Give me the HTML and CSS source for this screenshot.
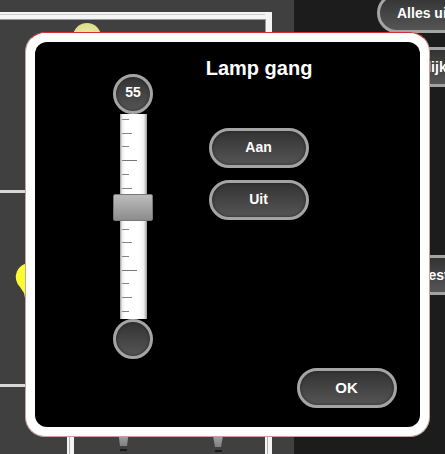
FILE: index.html
```html
<!DOCTYPE html>
<html lang="en">
<head>
  <meta charset="UTF-8">
  <title>Lamp gang</title>
  <link rel="stylesheet" href="styles.css">
</head>
<body>
  <!-- floor plan behind the dialog -->
  <svg class="plan" width="294" height="454" viewBox="0 0 294 454">
    <defs>
      <radialGradient id="paleLamp" cx="0.5" cy="0.7" r="0.7">
        <stop offset="0" stop-color="#f8f8a8"/>
        <stop offset="1" stop-color="#dcdc90"/>
      </radialGradient>
      <linearGradient id="lampBase" x1="0" y1="0" x2="0" y2="1">
        <stop offset="0" stop-color="#b4b4b4"/>
        <stop offset="1" stop-color="#808080"/>
      </linearGradient>
    </defs>
    <rect width="294" height="454" fill="#404040"/>

    <!-- walls -->
    <rect x="0" y="12" width="272" height="8" fill="#f4f4f4"/>
    <rect x="0" y="14" width="272" height="1" fill="#cfcfcf"/>
    <rect x="0" y="19" width="265" height="1" fill="#9a9a9a"/>
    <rect x="265" y="12" width="7" height="30" fill="#f4f4f4"/>
    <rect x="265" y="19" width="1" height="20" fill="#9a9a9a"/>
    <rect x="0" y="190" width="30" height="3" fill="#d8d8d8"/>
    <rect x="0" y="384" width="30" height="3" fill="#d8d8d8"/>
    <rect x="67" y="430" width="7" height="24" fill="#f4f4f4"/>
    <rect x="69" y="430" width="1" height="24" fill="#b0b0b0"/>
    <rect x="265" y="430" width="7" height="24" fill="#f4f4f4"/>
    <rect x="267" y="430" width="1" height="24" fill="#b0b0b0"/>

    <!-- lamps -->
    <circle cx="87" cy="37" r="14" fill="url(#paleLamp)"/>
    <path d="M30 263 A14 14 0 0 0 20 287 L24 293 L25 298 L30 298 Z" fill="#fcfc30"/>
    <path d="M118 430 H129 L127 446 H120 Z" fill="url(#lampBase)"/>
    <rect x="120" y="449" width="7" height="2" fill="#1a1a1a"/>
    <path d="M212 430 H224 L221 447 H215 Z" fill="url(#lampBase)"/>
    <rect x="215" y="450" width="7" height="2" fill="#1a1a1a"/>
  </svg>

  <div class="side-btn side-all">Alles uit</div>
  <div class="side-btn side-mid">Dagelijks</div>
  <div class="side-btn side-low">Test</div>

  <div class="dialog">
    <div class="dialog-inner">
      <div class="dialog-main">
        <div class="slider">
          <div class="knob">55</div>
          <div class="track">
            <i class="tick"></i><i class="tick mid"></i><i class="tick"></i><i class="tick long"></i>
            <i class="tick"></i><i class="tick mid"></i><i class="tick"></i><i class="tick long"></i>
            <i class="tick"></i><i class="tick mid"></i><i class="tick"></i><i class="tick long"></i>
            <i class="tick"></i><i class="tick mid"></i><i class="tick"></i>
          </div>
          <div class="knob"></div>
          <div class="thumb"></div>
        </div>
        <div class="controls">
          <h2 class="title">Lamp gang</h2>
          <button class="btn">Aan</button>
          <button class="btn">Uit</button>
        </div>
      </div>
      <div class="dialog-footer">
        <button class="btn btn-ok">OK</button>
      </div>
    </div>
  </div>
</body>
</html>
```

FILE: styles.css
```css
html, body {
  margin: 0;
  padding: 0;
  height: 100%;
  overflow: hidden;
}

body {
  position: relative;
  background: #1c1c1c;
  font-family: "Liberation Sans", Arial, sans-serif;
  color: #fff;
}

.plan {
  position: absolute;
  left: 0;
  top: 0;
}

/* buttons of the page behind the dialog */
.side-btn {
  position: absolute;
  width: 120px;
  height: 34px;
  line-height: 34px;
  padding-left: 17px;
  border: 3px solid #a4a4a4;
  border-radius: 20px;
  background: linear-gradient(#333, #555);
  font-size: 14px;
  font-weight: bold;
  white-space: nowrap;
}

.side-all {
  top: -7px;
  left: 377px;
}

.side-mid {
  top: 47px;
  left: 373px;
}

.side-low {
  top: 255px;
  left: 401px;
}

.dialog {
  position: absolute;
  left: 25px;
  top: 32px;
  width: 405px;
  height: 405px;
  box-sizing: border-box;
  padding: 9px;
  background: #fff;
  border: 1px solid #c9a0a0;
  border-top-color: #d03030;
  border-radius: 20px;
}

.dialog-inner {
  display: flex;
  flex-direction: column;
  justify-content: space-between;
  height: 100%;
  background: #000;
  border-radius: 12px;
}

.dialog-main {
  display: flex;
  gap: 56px;
  padding: 32px 0 0 78px;
}

.dialog-footer {
  display: flex;
  justify-content: flex-end;
  padding: 0 23px 19px 0;
}

.slider {
  position: relative;
  display: flex;
  flex-direction: column;
  width: 40px;
  height: 285px;
}

.knob {
  flex: none;
  box-sizing: border-box;
  width: 40px;
  height: 40px;
  line-height: 30px;
  border: 3px solid #a4a4a4;
  border-radius: 50%;
  background: linear-gradient(#333, #555);
  box-shadow: inset 0 0 3px #222;
  font-size: 14px;
  font-weight: bold;
  text-align: center;
}

.track {
  flex: 1;
  display: flex;
  flex-direction: column;
  justify-content: space-between;
  width: 27px;
  margin-left: 7px;
  box-sizing: border-box;
  padding: 5px 0 7px 2px;
  background: linear-gradient(to right, #999, #eee 8%, #fff 20%, #fff 70%, #f0f0f0 88%, #999);
}

.tick {
  display: block;
  width: 7px;
  height: 1px;
  background: #888;
}

.tick.mid {
  width: 10px;
}

.tick.long {
  width: 15px;
  background: #777;
}

.thumb {
  position: absolute;
  left: 0;
  top: 120px;
  box-sizing: border-box;
  width: 40px;
  height: 27px;
  border: 1px solid #777;
  border-radius: 2px;
  background: linear-gradient(#bcbcbc, #8c8c8c);
}

.controls {
  display: flex;
  flex-direction: column;
  align-items: center;
  gap: 12px;
  width: 100px;
}

.title {
  margin: -17px 0 36px;
  font-size: 20px;
  line-height: 23px;
  font-weight: bold;
  white-space: nowrap;
}

.btn {
  box-sizing: border-box;
  width: 100px;
  height: 40px;
  padding: 0 1px 2px 0;
  border: 3px solid #a4a4a4;
  border-radius: 20px;
  background: linear-gradient(#333, #555);
  box-shadow: inset 0 0 3px #222;
  color: #fff;
  font-family: inherit;
  font-size: 14px;
  font-weight: bold;
}

.btn-ok {
  font-size: 15px;
}
```
